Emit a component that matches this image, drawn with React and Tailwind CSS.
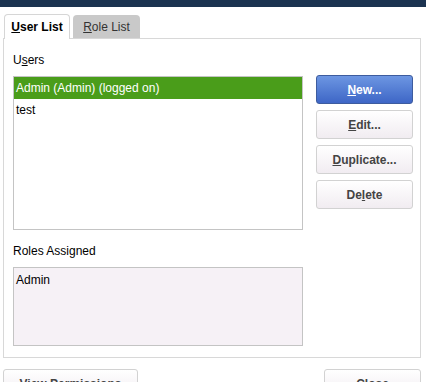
import React from 'react';

const font = { fontFamily: '"Liberation Sans", Arial, sans-serif' };

function Btn({ children, primary, className = '' }) {
  return (
    <button
      className={`h-[29px] rounded-[3px] border text-[12px] font-bold ${
        primary
          ? 'border-[#3d5c9e] bg-gradient-to-b from-[#6d96e2] to-[#3e66c6] text-white'
          : 'border-[#d2d2d2] bg-gradient-to-b from-[#ffffff] to-[#f1ecf1] text-[#444]'
      } ${className}`}
    >
      {children}
    </button>
  );
}

export default function App() {
  return (
    <div className="w-[426px] h-[382px] overflow-hidden bg-white text-black" style={font}>
      <div className="h-[7px] bg-[#1b3350]" />

      {/* tabs */}
      <div className="mt-[7px] pl-[4px] flex items-end">
        <div className="relative z-10 -mb-px w-[66px] h-[25px] border border-b-0 border-[#d6d6d6] rounded-t-[4px] bg-white flex items-center justify-center text-[12px] font-bold">
          <span><u>U</u>ser List</span>
        </div>
        <div className="ml-[3px] w-[67px] h-[23px] rounded-t-[4px] bg-[#c9c9c9] flex items-center justify-center text-[12px] text-[#333]">
          <span><u>R</u>ole List</span>
        </div>
      </div>

      {/* panel */}
      <div className="ml-[3px] w-[418px] h-[320px] border border-[#d8d8d8] flex pl-[9px]">
        <div className="w-[290px] pt-[13px] flex flex-col">
          <div className="h-[16px] leading-[16px] text-[12px]">U<u>s</u>ers</div>
          <div className="mt-[8px] h-[154px] border border-[#c4c4c4] bg-white">
            <div className="h-[22px] leading-[22px] pl-[2px] bg-[#4a9d1a] text-white text-[12px]">
              Admin (Admin) (logged on)
            </div>
            <div className="h-[22px] leading-[22px] pl-[2px] text-[12px]">test</div>
          </div>
          <div className="mt-[13px] h-[16px] leading-[16px] text-[12px]">Roles Assigned</div>
          <div className="mt-[8px] h-[79px] border border-[#c4c4c4] bg-[#f6f1f6] pl-[2px] pt-[4px] text-[12px] leading-[16px]">
            Admin
          </div>
        </div>

        <div className="ml-[13px] pt-[36px] flex flex-col gap-[6px]">
          <Btn primary className="w-[97px]"><u>N</u>ew...</Btn>
          <Btn className="w-[97px]"><u>E</u>dit...</Btn>
          <Btn className="w-[97px]"><u>D</u>uplicate...</Btn>
          <Btn className="w-[97px]">De<u>l</u>ete</Btn>
        </div>
      </div>

      {/* footer buttons */}
      <div className="mt-[11px] flex justify-between pl-[3px] pr-[5px]">
        <Btn className="w-[135px]">View Permissions</Btn>
        <Btn className="w-[97px]">Close</Btn>
      </div>
    </div>
  );
}
